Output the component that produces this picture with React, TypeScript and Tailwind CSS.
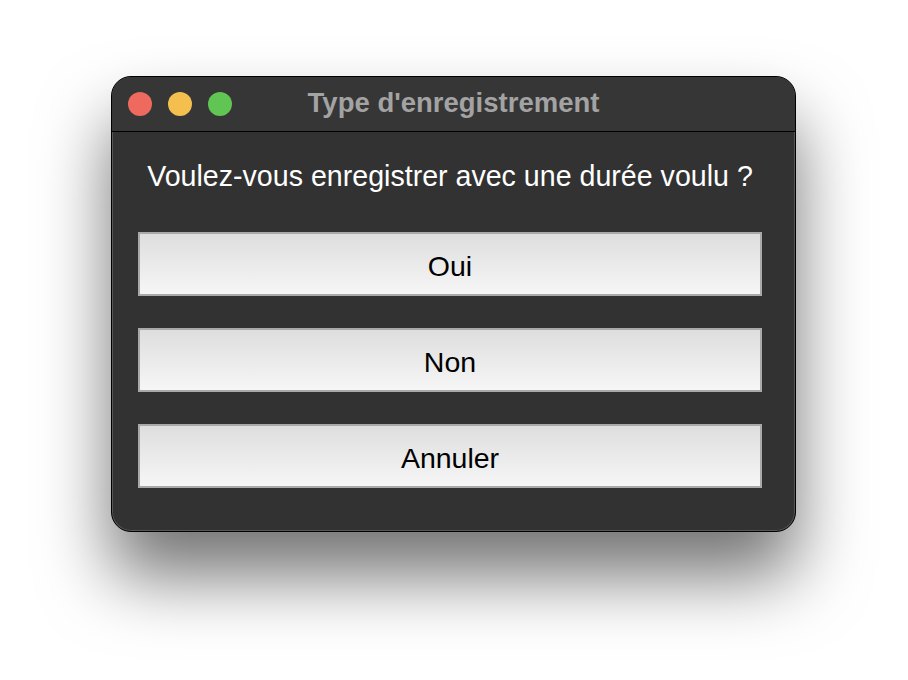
const lights = ["bg-[#ee6a5f]", "bg-[#f5bf4f]", "bg-[#61c554]"];

const DialogButton = ({ label }: { label: string }) => (
  <button className="h-16 w-full border-2 border-[#a9a9a9] bg-gradient-to-b from-[#dedede] to-[#f6f6f6] pt-[3px] text-[28.5px] leading-8 text-black">
    {label}
  </button>
);

export default function App() {
  return (
    <div
      className="h-[680px] w-[908px] bg-white pl-[111px] pt-[76px]"
      style={{ fontFamily: '"Liberation Sans", Arial, sans-serif' }}
    >
      <div className="flex h-[456px] w-[685px] flex-col overflow-hidden rounded-[20px] border border-black bg-[#323232] shadow-[0_44px_70px_rgba(0,0,0,0.55),inset_0_0_0_1px_rgba(255,255,255,0.18)]">
        {/* title bar */}
        <div className="relative flex h-[55px] shrink-0 items-center border-b border-black bg-[#363636] pl-4">
          <div className="flex gap-4">
            {lights.map((c) => (
              <span key={c} className={`block h-6 w-6 rounded-full ${c}`} />
            ))}
          </div>
          <div className="absolute inset-0 flex items-center justify-center pb-[2px] text-[27.5px] font-bold text-[#a3a3a3]">
            Type d'enregistrement
          </div>
        </div>

        {/* body */}
        <div className="flex flex-col pl-[26px] pr-[33px] pt-[28px]">
          <p className="text-center text-[28.6px] leading-8 text-white">
            Voulez-vous enregistrer avec une durée voulu ?
          </p>
          <div className="mt-[40px] flex flex-col gap-8">
            <DialogButton label="Oui" />
            <DialogButton label="Non" />
            <DialogButton label="Annuler" />
          </div>
        </div>
      </div>
    </div>
  );
}
